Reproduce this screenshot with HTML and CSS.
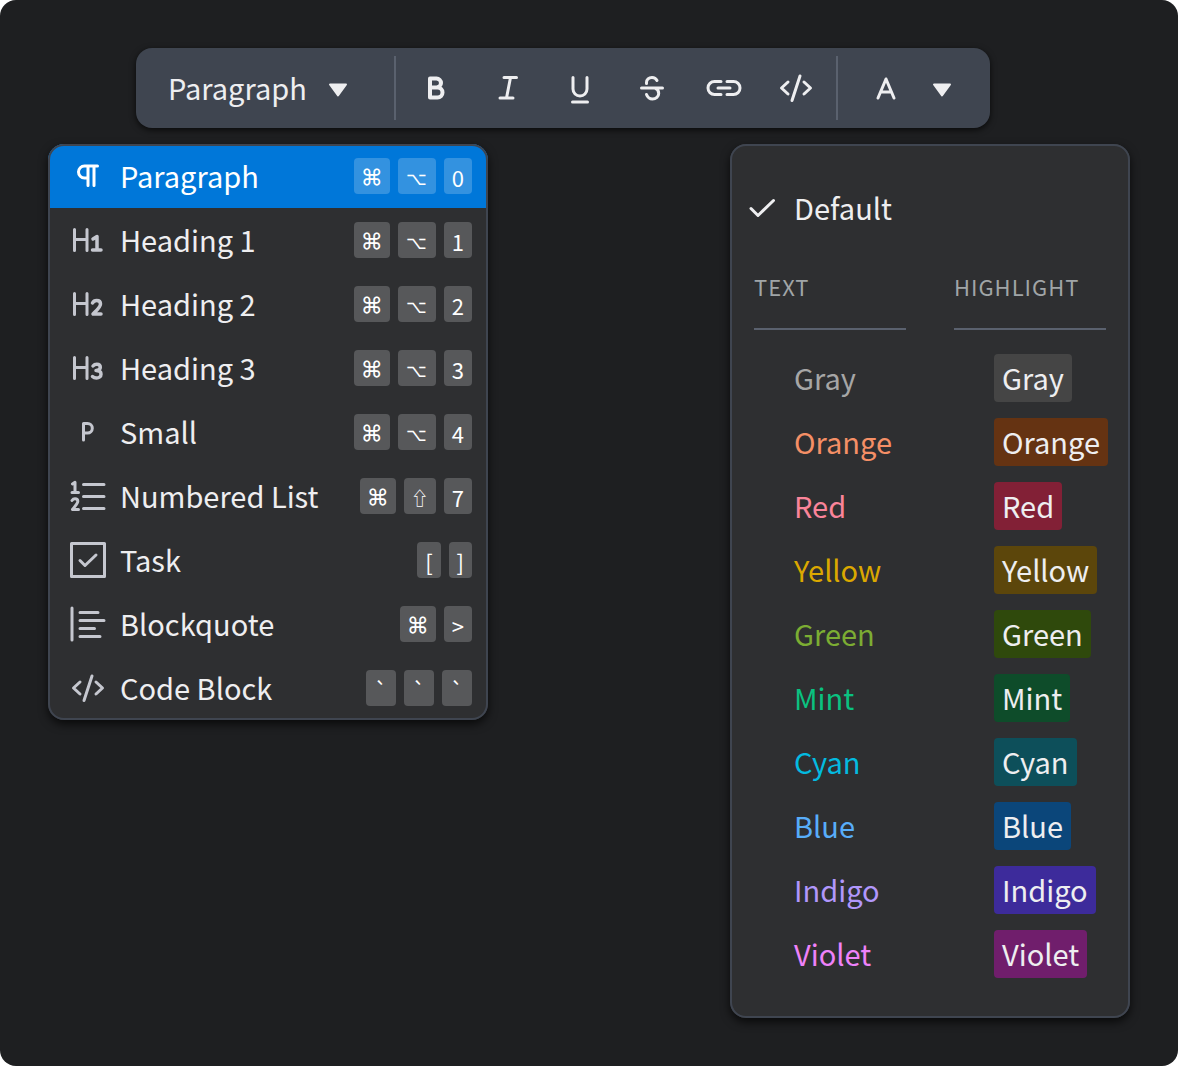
FILE: index.html
```html
<!DOCTYPE html>
<html lang="en">
<head>
<meta charset="utf-8">
<meta name="viewport" content="width=device-width, initial-scale=1">
<title>Editor toolbar</title>
<link rel="stylesheet" href="styles.css">
</head>
<body>
<svg class="sprite" aria-hidden="true">
  <symbol id="caret" viewBox="0 0 20 14"><path d="M2 1.500h16L10 12.500z" fill="currentColor" stroke="currentColor" stroke-width="2" stroke-linejoin="round"/></symbol>
  <symbol id="code" viewBox="0 0 36 36"><path d="M10 12l-6.500 6 6.500 6M26 12l6.500 6-6.500 6M22 6l-8 24.500"/></symbol>
</svg>
<main class="canvas">
  <div class="toolbar" role="toolbar" aria-label="Formatting">
    <button class="style-picker" type="button" aria-haspopup="menu" aria-expanded="true"><span class="picker-label">Paragraph</span><svg class="caret"><use href="#caret"/></svg></button>
    <div class="tools">
      <button class="tool" type="button" aria-label="Bold"><svg class="icon" viewBox="0 0 36 36"><path stroke-width="4" d="M12 8.500h6.500a4.500 4.500 0 0 1 0 9H12zM12 17.500h7.500a5 5 0 0 1 0 10H12z"/></svg></button>
      <button class="tool" type="button" aria-label="Italic"><svg class="icon" viewBox="0 0 36 36"><path d="M14 7.500h12.500M10 28h13M20.500 7.500l-4 20.500"/></svg></button>
      <button class="tool" type="button" aria-label="Underline"><svg class="icon" viewBox="0 0 36 36"><path d="M11 7.500v11.500a7 7 0 0 0 14 0V7.500M10.500 32h15"/></svg></button>
      <button class="tool" type="button" aria-label="Strikethrough"><svg class="icon" viewBox="0 0 36 36"><path d="M7.500 18h21M23 10.500c-1-2-2.800-3-5-3-3.200 0-5.500 2.200-5.500 5v1M12.500 24.500c1 2.700 3.200 4.500 6 4.500 3.500 0 6.200-2.500 6.200-5.500 0-2.500-1.200-4.500-3.700-5.500"/></svg></button>
      <button class="tool" type="button" aria-label="Link"><svg class="icon" viewBox="0 0 36 36"><path d="M15 11.500H8.500a6.500 6.500 0 0 0 0 13H15M21 11.500h6.500a6.500 6.500 0 0 1 0 13H21M12 18h12"/></svg></button>
      <button class="tool" type="button" aria-label="Code"><svg class="icon"><use href="#code"/></svg></button>
    </div>
    <button class="color-picker" type="button" aria-label="Text color" aria-haspopup="menu" aria-expanded="true"><svg class="icon" viewBox="0 0 36 36"><path d="M10 28l8-19 8 19M12.500 22h11"/></svg><svg class="caret"><use href="#caret"/></svg></button>
  </div>

  <div class="menus">
    <div class="menu block-menu" role="menu" aria-label="Block style">
      <button class="item active" type="button" role="menuitem"><svg class="icon" viewBox="0 0 36 36"><path d="M27.500 8H14.500a6 6 0 0 0 0 12H18M18 8v19.500M24 8v19.500"/></svg><span class="label">Paragraph</span><kbd class="cmd">⌘</kbd><kbd class="opt">⌥</kbd><kbd>0</kbd></button>
      <button class="item" type="button" role="menuitem"><svg class="icon" viewBox="0 0 36 36"><path d="M4.500 7.500v21M17 7.500v21M4.500 17.500H17"/><path stroke-width="3.500" d="M23 17l4-2.500V28M22.500 28H31"/></svg><span class="label">Heading 1</span><kbd class="cmd">⌘</kbd><kbd class="opt">⌥</kbd><kbd>1</kbd></button>
      <button class="item" type="button" role="menuitem"><svg class="icon" viewBox="0 0 36 36"><path d="M4.500 7.500v21M17 7.500v21M4.500 17.500H17"/><path stroke-width="3.500" d="M22.500 17c1-2 2.500-2.500 4.200-2.500 2.300 0 3.800 1.300 3.800 3.500 0 3-3 5.500-7.500 10h8"/></svg><span class="label">Heading 2</span><kbd class="cmd">⌘</kbd><kbd class="opt">⌥</kbd><kbd>2</kbd></button>
      <button class="item" type="button" role="menuitem"><svg class="icon" viewBox="0 0 36 36"><path d="M4.500 7.500v21M17 7.500v21M4.500 17.500H17"/><path stroke-width="3.500" d="M23 16c1-1.200 2.300-1.700 3.800-1.700 2 0 3.500 1 3.500 3 0 2.200-1.800 3.200-4.300 3.200 3 0 5 1.200 5 3.700 0 2.400-2 3.800-4.500 3.800-1.700 0-3-.5-4-1.500"/></svg><span class="label">Heading 3</span><kbd class="cmd">⌘</kbd><kbd class="opt">⌥</kbd><kbd>3</kbd></button>
      <button class="item" type="button" role="menuitem"><svg class="icon" viewBox="0 0 36 36"><path d="M13.500 26v-16.500h4a4.800 4.800 0 0 1 0 9.600h-4"/></svg><span class="label">Small</span><kbd class="cmd">⌘</kbd><kbd class="opt">⌥</kbd><kbd>4</kbd></button>
      <button class="item" type="button" role="menuitem"><svg class="icon" viewBox="0 0 36 36"><path d="M13.500 6.500h20.500M13.500 18.500h20.500M13.500 30.500h20.500"/><path d="M2.500 6l2.500-1.700V14.500M2 14.500h6.500M2 22.500c.8-1.200 1.800-1.700 3-1.700 1.700 0 2.800 1 2.800 2.500 0 2-2 3.900-5.300 8.200h6"/></svg><span class="label">Numbered List</span><kbd class="cmd">⌘</kbd><kbd class="shift">⇧</kbd><kbd>7</kbd></button>
      <button class="item" type="button" role="menuitem"><svg class="icon" viewBox="0 0 36 36"><path d="M1.500 1.500h33v33h-33zM10 18.500l5 5L26 13"/></svg><span class="label">Task</span><kbd>[</kbd><kbd>]</kbd></button>
      <button class="item" type="button" role="menuitem"><svg class="icon" viewBox="0 0 36 36"><path d="M2 2v32M10 6.500h18M10 14.500h24M10 22.500h14.500M10 30.500h20"/></svg><span class="label">Blockquote</span><kbd class="cmd">⌘</kbd><kbd>&gt;</kbd></button>
      <button class="item" type="button" role="menuitem"><svg class="icon"><use href="#code"/></svg><span class="label">Code Block</span><kbd class="tick">`</kbd><kbd class="tick">`</kbd><kbd class="tick">`</kbd></button>
    </div>

    <div class="menu color-menu" role="menu" aria-label="Text color">
      <button class="default" type="button" role="menuitemradio" aria-checked="true"><svg class="check" viewBox="0 0 28 28"><path d="M3 14.500l7 7L25.500 6.500"/></svg><span class="picker-label">Default</span></button>
      <div class="columns">
        <section class="column">
          <h2>TEXT</h2>
          <button class="swatch text-gray" type="button">Gray</button>
          <button class="swatch text-orange" type="button">Orange</button>
          <button class="swatch text-red" type="button">Red</button>
          <button class="swatch text-yellow" type="button">Yellow</button>
          <button class="swatch text-green" type="button">Green</button>
          <button class="swatch text-mint" type="button">Mint</button>
          <button class="swatch text-cyan" type="button">Cyan</button>
          <button class="swatch text-blue" type="button">Blue</button>
          <button class="swatch text-indigo" type="button">Indigo</button>
          <button class="swatch text-violet" type="button">Violet</button>
        </section>
        <section class="column">
          <h2>HIGHLIGHT</h2>
          <button class="swatch chip bg-gray" type="button">Gray</button>
          <button class="swatch chip bg-orange" type="button">Orange</button>
          <button class="swatch chip bg-red" type="button">Red</button>
          <button class="swatch chip bg-yellow" type="button">Yellow</button>
          <button class="swatch chip bg-green" type="button">Green</button>
          <button class="swatch chip bg-mint" type="button">Mint</button>
          <button class="swatch chip bg-cyan" type="button">Cyan</button>
          <button class="swatch chip bg-blue" type="button">Blue</button>
          <button class="swatch chip bg-indigo" type="button">Indigo</button>
          <button class="swatch chip bg-violet" type="button">Violet</button>
        </section>
      </div>
    </div>
  </div>
</main>
</body>
</html>
```
FILE: styles.css
```css
* { box-sizing: border-box; }

body {
  margin: 0;
  background: #fff;
  color: #eeeef0;
  font-family: "Noto Sans CJK SC", "Noto Sans", sans-serif;
  font-size: 29px;
  line-height: 46px;
}

button {
  border: 0;
  padding: 0;
  background: none;
  color: inherit;
  font: inherit;
  text-align: left;
  white-space: nowrap;
  cursor: pointer;
}

svg {
  flex: none;
  fill: none;
  stroke: currentColor;
  stroke-width: 3;
  stroke-linecap: round;
  stroke-linejoin: round;
}

.sprite { display: none; }
.icon { width: 36px; height: 36px; }
.caret { width: 20px; height: 14px; margin-top: 4px; }
.check { width: 28px; height: 28px; }

.canvas {
  padding: 48px;
  border-radius: 16px;
  background: #1e1f21;
}

.toolbar {
  display: flex;
  width: fit-content;
  height: 80px;
  margin-left: 88px;
  padding: 8px;
  border-radius: 16px;
  background: #3f4550;
  box-shadow: 0 2px 6px rgba(0, 0, 0, .7);
}

.style-picker {
  display: flex;
  align-items: center;
  gap: 21px;
  width: 250px;
  padding-left: 24px;
}

.picker-label { padding-bottom: 2px; }

.tools {
  display: flex;
  padding: 0 4px;
  border: solid #5a616e;
  border-width: 0 2px;
}

.tool {
  display: flex;
  align-items: center;
  justify-content: center;
  width: 72px;
}

.color-picker {
  display: flex;
  align-items: center;
  gap: 28px;
  padding: 0 30px;
}

.menus {
  display: flex;
  align-items: flex-start;
  justify-content: space-between;
  margin-top: 16px;
}

.menu {
  overflow: hidden;
  border-radius: 16px;
  outline: 2px solid #3f4550;
  outline-offset: -2px;
  background: #2e2f31;
  box-shadow: 0 4px 10px rgba(0, 0, 0, .7);
}

.block-menu { width: 440px; }

.item {
  display: flex;
  align-items: center;
  gap: 8px;
  width: 100%;
  height: 64px;
  padding: 0 16px 0 22px;
}

.item .icon { color: #c5c7cf; }
.item.active { background: #0077d9; color: #fff; }
.item.active .icon { color: #fff; }

.label {
  flex: 1;
  padding: 0 0 2px 6px;
}

kbd {
  height: 36px;
  padding: 2px 8px 0;
  border-radius: 4px;
  background: #57585a;
  color: #fff;
  font-family: inherit;
  font-size: 22px;
  line-height: 34px;
  text-align: center;
}

.active kbd { background: #3392e0; }

.cmd,
.opt,
.shift,
.tick {
  padding-right: 0;
  padding-left: 0;
}

.cmd { width: 36px; font-family: Inter, sans-serif; }
.opt { width: 38px; font-size: 18px; }
.shift { width: 32px; font-size: 18px; }
.tick { width: 30px; }

.color-menu {
  width: 400px;
  padding: 40px 24px;
}

.default {
  display: flex;
  align-items: center;
  gap: 18px;
  width: 100%;
  margin-left: -6px;
}

.columns {
  display: grid;
  grid-template-columns: repeat(2, minmax(0, 1fr));
  gap: 48px;
  margin-top: 32px;
}

.column {
  display: flex;
  flex-direction: column;
  align-items: flex-start;
  gap: 16px;
}

h2 {
  width: 100%;
  height: 66px;
  margin: 0 0 8px;
  border-bottom: 2px solid #5a616e;
  color: #a0a5a7;
  font-size: 22px;
  font-weight: 400;
  letter-spacing: 1px;
  line-height: 44px;
}

.swatch {
  height: 48px;
  margin-left: 40px;
  padding-bottom: 2px;
}

.chip {
  padding: 0 8px 2px;
  border-radius: 4px;
}

.text-gray { color: #a6a6a6; }
.text-orange { color: #f58f66; }
.text-red { color: #fa8499; }
.text-yellow { color: #dba800; }
.text-green { color: #7cad33; }
.text-mint { color: #0ac280; }
.text-cyan { color: #03bbe0; }
.text-blue { color: #58adf9; }
.text-indigo { color: #b197fc; }
.text-violet { color: #ee82fa; }

.bg-gray { background: #454545; }
.bg-orange { background: #653312; }
.bg-red { background: #822036; }
.bg-yellow { background: #5c460b; }
.bg-green { background: #2f490c; }
.bg-mint { background: #0e4c2a; }
.bg-cyan { background: #0d4f5a; }
.bg-blue { background: #0b467a; }
.bg-indigo { background: #3d2b9b; }
.bg-violet { background: #701e6c; }
```
